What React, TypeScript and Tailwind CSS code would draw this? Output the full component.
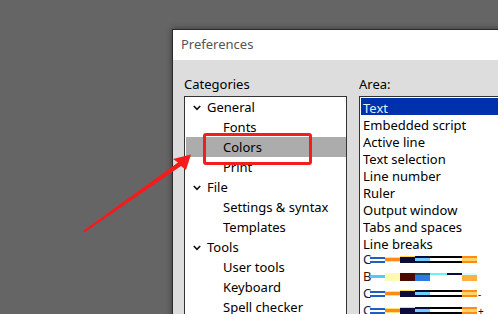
export default function App() {
    const tree: { label: string; level: 0 | 1; selected?: boolean }[] = [
        { label: 'General', level: 0 },
        { label: 'Fonts', level: 1 },
        { label: 'Colors', level: 1, selected: true },
        { label: 'Print', level: 1 },
        { label: 'File', level: 0 },
        { label: 'Settings & syntax', level: 1 },
        { label: 'Templates', level: 1 },
        { label: 'Tools', level: 0 },
        { label: 'User tools', level: 1 },
        { label: 'Keyboard', level: 1 },
        { label: 'Spell checker', level: 1 },
    ];

    const areas = [
        'Text',
        'Embedded script',
        'Active line',
        'Text selection',
        'Line number',
        'Ruler',
        'Output window',
        'Tabs and spaces',
        'Line breaks',
    ];

    return (
        <div className="relative w-[498px] h-[314px] overflow-hidden bg-[#656565] pl-[172px] pt-[29px] font-['Noto_Sans',sans-serif] text-[13px]">
            {/* Dialog */}
            <div className="w-[340px] flex flex-col border border-[#2a2a2a] bg-[#dddddd] shadow-[0_0_6px_rgba(0,0,0,0.45)]">
                <div className="h-[30px] shrink-0 bg-white pl-[8px] flex items-center text-[#555]">Preferences</div>

                <div className="flex pt-[14px] pl-[11px] gap-[12px]">
                    {/* Categories */}
                    <div className="w-[163px] shrink-0">
                        <div className="h-[20px] leading-[20px] mb-[2px] text-black">Categories</div>
                        <div className="h-[260px] bg-white border border-[#333]">
                            {tree.map((t) => (
                                <div
                                    key={t.label}
                                    className={
                                        'h-[20px] flex items-center pt-[1px] text-black whitespace-nowrap ' +
                                        (t.selected ? 'bg-[#acacac] ml-[1px] pl-[37px]' : t.level === 0 ? 'pl-[8px]' : 'pl-[38px]')
                                    }
                                >
                                    {t.level === 0 && (
                                        <svg width="8" height="6" viewBox="0 0 8 6" className="mr-[6px]">
                                            <polyline points="0.8,1 4,4.4 7.2,1" fill="none" stroke="#111" strokeWidth="1.6" />
                                        </svg>
                                    )}
                                    {t.label}
                                </div>
                            ))}
                        </div>
                    </div>

                    {/* Area */}
                    <div className="flex-1">
                        <div className="h-[20px] leading-[20px] mb-[2px] text-black">Area:</div>
                        <div className="mt-[1px] h-[260px] bg-white border border-[#333] pt-[1px]">
                            {areas.map((a, i) => (
                                <div
                                    key={a}
                                    className={
                                        'h-[17px] leading-[20px] whitespace-nowrap ' +
                                        (i === 0 ? 'bg-[#0031ad] text-[#dcefff] ml-[1px] pl-[2px]' : 'text-black pl-[3px]')
                                    }
                                >
                                    {a}
                                </div>
                            ))}
                            <PreviewA letter="C" />
                            <PreviewB />
                            <PreviewA letter="C" tail="-" />
                            <PreviewA letter="C" tail="+" />
                        </div>
                    </div>
                </div>
            </div>

            {/* Red annotation box */}
            <div className="absolute left-[203px] top-[133px] w-[109px] h-[32px] border-[3px] border-[#f21d1d] rounded-[3px]" />

            {/* Red arrow */}
            <svg className="absolute inset-0 pointer-events-none" width="498" height="314" viewBox="0 0 498 314">
                <polygon
                    points="83,231 178,162.5 173,159 191,154.5 186,170 181,166 84.5,232.5"
                    fill="#f41b1b"
                />
            </svg>
        </div>
    );
}

function PreviewA({ letter, tail }: { letter: string; tail?: string }) {
    return (
        <div className="h-[17px] flex items-center pl-[3px]">
            <span className="w-[7px] leading-[19px] text-[#1a1a40]">{letter}</span>
            <span className="w-[15px] h-[6px] border-y-2 border-[#1f5fc4]" />
            <span className="w-[15px] h-[5px] bg-[#ff8a14] border-y border-[#ffe27a]" />
            <span className="w-[15px] h-[7px] bg-[#0b0b3c] border-t border-[#ffd84a]" />
            <span className="w-[15px] h-[7px] bg-[#6fd0ff] border-y-2 border-[#0b0b3c]" />
            <span className="w-[32px] h-[7px] bg-white border-y-2 border-black" />
            <span className="w-[15px] h-[7px] bg-[#ffd46a] border-y-2 border-[#ff8a14]" />
            {tail && <span className="ml-[1px] text-[10px] leading-none text-[#111]">{tail}</span>}
        </div>
    );
}

function PreviewB() {
    return (
        <div className="h-[17px] flex items-center pl-[3px]">
            <span className="w-[7px] leading-[19px] text-[#3a1400]">B</span>
            <span className="w-[15px] h-[3px] bg-[#55c8f5]" />
            <span className="w-[15px] h-[8px] bg-[#fff9b4]" />
            <span className="w-[15px] h-[8px] bg-[#4a0c00]" />
            <span className="w-[15px] h-[8px] bg-[#2a7ae8] border-t-2 border-[#1a5060]" />
            <span className="w-[17px] h-[8px] border-t-2 border-[#6ef0f0]" />
            <span className="w-[15px] h-[8px] border-t-2 border-[#0b0b3c]" />
            <span className="w-[15px] h-[8px] bg-[#ffb040] border-t-2 border-[#d8ffff]" />
        </div>
    );
}
